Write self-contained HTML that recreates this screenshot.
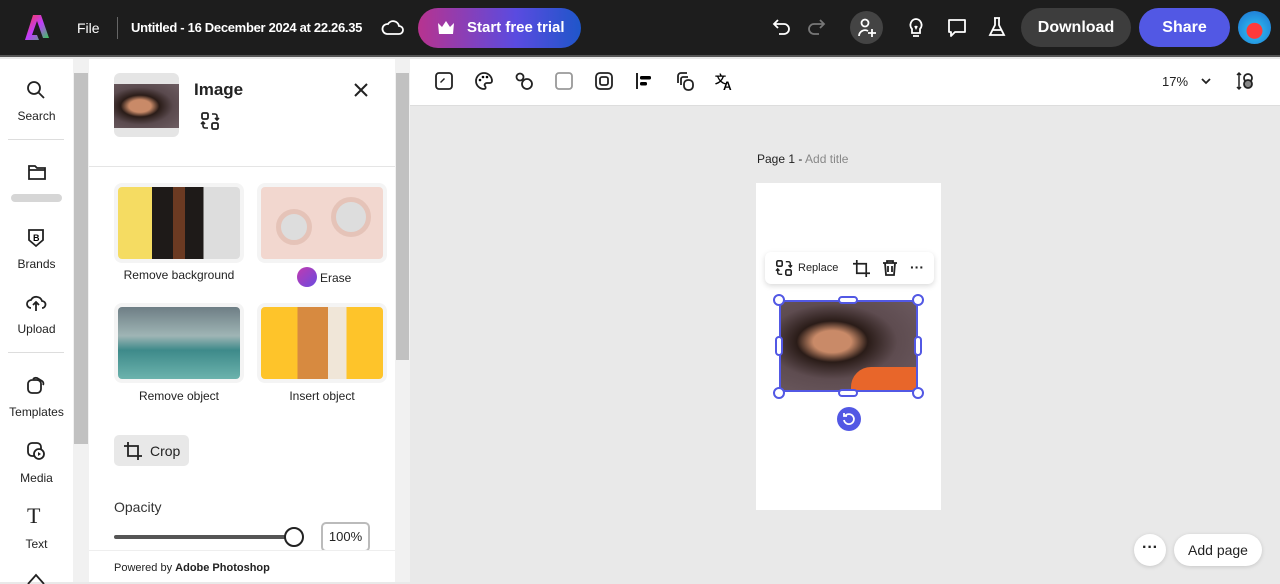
<!DOCTYPE html>
<html><head><meta charset="utf-8">
<style>
*{box-sizing:border-box;margin:0;padding:0}
body{width:1280px;height:582px;overflow:hidden;font-family:"Liberation Sans",sans-serif;background:#e9e9e9;position:relative;color:#222}
.abs{position:absolute}
.top{left:0;top:0;width:1280px;height:57px;background:#1d1d1d;border-bottom:2px solid #555}
.tw{color:#fff;font-size:14px}
.rail{left:0;top:59px;width:73px;height:523px;background:#fff}
.ri{position:absolute;left:0;width:73px;text-align:center;font-size:12px;color:#222}
.sb{background:#f1f1f1}
.panel{left:89px;top:59px;width:306px;height:523px;background:#fff}
.card{position:absolute;width:130px;height:80px;border-radius:8px;background:#f4f4f4;padding:4px}
.lbl{position:absolute;font-size:12px;text-align:center;width:140px}
.tb svg{position:absolute;top:71px}
.h{position:absolute;width:12px;height:12px;border:2px solid #5258e4;background:#fff;border-radius:50%}
.btn{position:absolute;color:#fff;font-weight:bold;font-size:16px;text-align:center;line-height:39px}
</style></head><body>
<div class="abs top"></div>
<svg class="abs" style="left:25px;top:14px" width="24" height="26" viewBox="0 0 24 26"><defs><linearGradient id="lg" x1="0" y1="0" x2="1" y2="1"><stop offset="0" stop-color="#ff3a3a"/><stop offset=".5" stop-color="#c03cff"/><stop offset="1" stop-color="#2cd44a"/></linearGradient></defs><path d="M8 1h8l8 23h-6l-6-17-5 14h5l2 5H0z" fill="url(#lg)"/></svg>
<div class="abs tw" style="left:77px;top:20px">File</div>
<div class="abs" style="left:117px;top:17px;width:1px;height:22px;background:#666"></div>
<div class="abs tw" style="left:131px;top:20px;font-weight:bold;font-size:13px;letter-spacing:-0.3px">Untitled - 16 December 2024 at 22.26.35</div>
<svg class="abs" style="left:381px;top:17px" width="24" height="20" viewBox="0 0 24 20"><path d="M6 17h12a4 4 0 0 0 0-8 6 6 0 0 0-11-2 5 5 0 0 0-1 10z" fill="none" stroke="#fff" stroke-width="1.8"/></svg>
<div class="abs" style="left:418px;top:8px;width:163px;height:40px;border-radius:20px;background:linear-gradient(90deg,#b7338f,#5a4be0 60%,#1f56c9)"></div>
<svg class="abs" style="left:437px;top:20px" width="18" height="15" viewBox="0 0 18 15"><path d="M1 3l4 4 4-6 4 6 4-4-1 11H2z" fill="#fff"/></svg>
<div class="abs tw" style="left:467px;top:19px;font-weight:bold;font-size:15px">Start free trial</div>
<svg class="abs" style="left:772px;top:17px" width="20" height="20" viewBox="0 0 20 20"><path d="M6 3L2 7l4 4M2 7h10a5 5 0 0 1 0 10H7" fill="none" stroke="#fff" stroke-width="1.8"/></svg>
<svg class="abs" style="left:806px;top:17px" width="20" height="20" viewBox="0 0 20 20"><path d="M14 3l4 4-4 4M18 7H8a5 5 0 0 0 0 10h5" fill="none" stroke="#777" stroke-width="1.8"/></svg>
<div class="abs" style="left:850px;top:11px;width:33px;height:33px;border-radius:50%;background:#444"></div>
<svg class="abs" style="left:855px;top:16px" width="24" height="24" viewBox="0 0 24 24"><circle cx="10" cy="7" r="3.5" fill="none" stroke="#fff" stroke-width="1.8"/><path d="M4 20a6 6 0 0 1 9-5M17 13v8M13 17h8" fill="none" stroke="#fff" stroke-width="1.8"/></svg>
<svg class="abs" style="left:906px;top:17px" width="20" height="22" viewBox="0 0 20 22"><path d="M10 2a6 6 0 0 0-4 10v4h8v-4a6 6 0 0 0-4-10zM7 19h6M9 9l1 2 1-2" fill="none" stroke="#fff" stroke-width="1.8"/></svg>
<svg class="abs" style="left:946px;top:17px" width="22" height="22" viewBox="0 0 22 22"><path d="M3 3h16v12H9l-4 4v-4H3z" fill="none" stroke="#fff" stroke-width="1.8" stroke-linejoin="round"/></svg>
<svg class="abs" style="left:987px;top:16px" width="20" height="22" viewBox="0 0 20 22"><path d="M7 2h6M8 2v7l-5 10h14L12 9V2M6 14h8" fill="none" stroke="#fff" stroke-width="1.8"/></svg>
<div class="btn" style="left:1021px;top:8px;width:110px;height:39px;border-radius:20px;background:#3d3d3d">Download</div>
<div class="btn" style="left:1139px;top:8px;width:91px;height:39px;border-radius:20px;background:#5258e4">Share</div>
<div class="abs" style="left:1238px;top:11px;width:33px;height:33px;border-radius:50%;background:radial-gradient(circle at 50% 60%,#ff3a3a 0 30%,#29a8e8 32%,#1c6fd0)"></div>

<div class="abs rail"></div>
<svg class="abs" style="left:26px;top:80px" width="20" height="20" viewBox="0 0 20 20"><circle cx="8" cy="8" r="6" fill="none" stroke="#222" stroke-width="1.8"/><path d="M12.5 12.5L18 18" stroke="#222" stroke-width="1.8"/></svg>
<div class="ri" style="top:109px">Search</div>
<div class="abs" style="left:8px;top:139px;width:56px;height:1px;background:#ddd"></div>
<svg class="abs" style="left:27px;top:163px" width="20" height="18" viewBox="0 0 20 18"><path d="M2 3h6l2 2h8v11H2z M2 7h16" fill="none" stroke="#222" stroke-width="1.8"/></svg>
<div class="abs" style="left:11px;top:194px;width:51px;height:8px;border-radius:4px;background:#d6d6d6"></div>
<svg class="abs" style="left:27px;top:228px" width="18" height="20" viewBox="0 0 18 20"><path d="M2 2h14v10l-7 6-7-6z" fill="none" stroke="#222" stroke-width="1.8"/><text x="6" y="13" font-size="9" font-weight="bold" font-family="Liberation Sans">B</text></svg>
<div class="ri" style="top:257px">Brands</div>
<svg class="abs" style="left:25px;top:293px" width="22" height="20" viewBox="0 0 22 20"><path d="M6 15a4 4 0 0 1 0-8 6 6 0 0 1 11 1 3.5 3.5 0 0 1 0 7M11 18V9M8 12l3-3 3 3" fill="none" stroke="#222" stroke-width="1.8"/></svg>
<div class="ri" style="top:322px">Upload</div>
<div class="abs" style="left:8px;top:352px;width:56px;height:1px;background:#ddd"></div>
<svg class="abs" style="left:26px;top:376px" width="20" height="20" viewBox="0 0 20 20"><rect x="2" y="4" width="13" height="13" rx="4" fill="none" stroke="#222" stroke-width="1.8"/><path d="M7 3a4 4 0 0 1 4-1l5 3a3 3 0 0 1 1 4" fill="none" stroke="#222" stroke-width="1.8"/></svg>
<div class="ri" style="top:405px">Templates</div>
<svg class="abs" style="left:26px;top:441px" width="20" height="20" viewBox="0 0 20 20"><rect x="2" y="2" width="13" height="13" rx="4" fill="none" stroke="#222" stroke-width="1.8"/><circle cx="13" cy="13" r="5" fill="#fff" stroke="#222" stroke-width="1.8"/><path d="M12 11v4l3-2z" fill="#222"/></svg>
<div class="ri" style="top:471px">Media</div>
<div class="abs" style="left:27px;top:503px;font-family:'Liberation Serif';font-size:22px">T</div>
<div class="ri" style="top:537px">Text</div>
<svg class="abs" style="left:25px;top:572px" width="22" height="12" viewBox="0 0 22 12"><path d="M3 12l8-9 8 9" fill="none" stroke="#222" stroke-width="1.8"/></svg>

<div class="abs sb" style="left:73px;top:59px;width:16px;height:523px"></div>
<div class="abs" style="left:74px;top:73px;width:14px;height:371px;background:#c1c1c1"></div>
<div class="abs sb" style="left:395px;top:59px;width:15px;height:523px"></div>
<div class="abs" style="left:396px;top:73px;width:13px;height:287px;background:#c1c1c1"></div>

<div class="abs panel"></div>
<div class="abs" style="left:114px;top:73px;width:65px;height:64px;border-radius:6px;background:#e5e5e5;overflow:hidden"><div style="margin-top:11px;height:44px;background:radial-gradient(ellipse at 40% 50%,#c98a68 0 20%,#2a1c18 35%,#5a4a4e 60%,#6e5e63);"></div></div>
<div class="abs" style="left:194px;top:80px;font-size:17px;font-weight:bold">Image</div>
<svg class="abs" style="left:200px;top:111px" width="20" height="20" viewBox="0 0 20 20"><rect x="2" y="2" width="6" height="6" rx="1.5" fill="none" stroke="#222" stroke-width="1.8"/><rect x="12" y="12" width="6" height="6" rx="1.5" fill="none" stroke="#222" stroke-width="1.8"/><path d="M12 3h3a2 2 0 0 1 2 2v4M15 7l2 2 2-2M8 17H5a2 2 0 0 1-2-2v-4M1 13l2-2 2 2" fill="none" stroke="#222" stroke-width="1.6"/></svg>
<svg class="abs" style="left:354px;top:83px" width="14" height="14" viewBox="0 0 14 14"><path d="M1 1l12 12M13 1L1 13" stroke="#222" stroke-width="2"/></svg>
<div class="abs" style="left:89px;top:166px;width:306px;height:1px;background:#e5e5e5"></div>

<div class="card" style="left:114px;top:183px"><div style="height:72px;border-radius:4px;background:linear-gradient(90deg,#f5dc62 0 28%,#1e1a18 28% 45%,#6b3a22 45% 55%,#1e1a18 55% 70%,#ddd 70%)"></div></div>
<div class="lbl" style="left:109px;top:268px">Remove background</div>
<div class="card" style="left:257px;top:183px"><div style="height:72px;border-radius:4px;background:#f2d7cf;position:relative"><div style="position:absolute;left:15px;top:22px;width:36px;height:36px;border-radius:50%;border:5px solid #e5c3b8;background:#ddd"></div><div style="position:absolute;left:70px;top:10px;width:40px;height:40px;border-radius:50%;border:5px solid #e5c3b8;background:#ddd"></div></div></div>
<div class="abs" style="left:297px;top:267px;width:20px;height:20px;border-radius:50%;background:linear-gradient(135deg,#c13ab0,#6a4be0)"></div>
<div class="abs" style="left:320px;top:271px;font-size:12px">Erase</div>
<div class="card" style="left:114px;top:303px"><div style="height:72px;border-radius:4px;background:linear-gradient(180deg,#6e7e85 0,#9fb5b5 40%,#3e8a8a 60%,#6cb3ad)"></div></div>
<div class="lbl" style="left:109px;top:389px">Remove object</div>
<div class="card" style="left:257px;top:303px"><div style="height:72px;border-radius:4px;background:linear-gradient(90deg,#fec42a 0 30%,#d78a40 30% 55%,#f0e6d8 55% 70%,#fec42a 70%)"></div></div>
<div class="lbl" style="left:252px;top:389px">Insert object</div>

<div class="abs" style="left:114px;top:435px;width:75px;height:31px;border-radius:5px;background:#e8e8e8"></div>
<svg class="abs" style="left:124px;top:442px" width="18" height="18" viewBox="0 0 18 18"><path d="M4 0v14h14M0 4h14v14" fill="none" stroke="#222" stroke-width="1.8"/></svg>
<div class="abs" style="left:150px;top:443px;font-size:14px">Crop</div>
<div class="abs" style="left:114px;top:499px;font-size:14px;color:#333">Opacity</div>
<div class="abs" style="left:114px;top:535px;width:175px;height:4px;border-radius:2px;background:#555"></div>
<div class="abs" style="left:284px;top:527px;width:20px;height:20px;border-radius:50%;border:2px solid #222;background:#fff"></div>
<div class="abs" style="left:321px;top:522px;width:49px;height:30px;border:2px solid #bbb;border-radius:5px;font-size:13px;text-align:center;line-height:26px">100%</div>
<div class="abs" style="left:89px;top:550px;width:306px;height:32px;background:#fff;border-top:1px solid #eee"></div>
<div class="abs" style="left:114px;top:562px;font-size:11px;color:#222">Powered by <b>Adobe Photoshop</b></div>

<div class="abs" style="left:410px;top:59px;width:870px;height:47px;background:#fff;border-bottom:1px solid #ddd"></div>
<div class="tb">
<svg style="left:434px" width="20" height="20" viewBox="0 0 20 20"><rect x="2" y="2" width="16" height="16" rx="3" fill="none" stroke="#222" stroke-width="1.8"/><path d="M6 11l4-4 1 1-4 4z" fill="#222"/></svg>
<svg style="left:474px" width="20" height="20" viewBox="0 0 20 20"><path d="M10 2a8 8 0 1 0 0 16c2 0 2-2 1-3s0-3 2-3h3a2 2 0 0 0 2-2 8 8 0 0 0-8-8z" fill="none" stroke="#222" stroke-width="1.8"/><circle cx="6" cy="9" r="1.3"/><circle cx="9" cy="6" r="1.3"/><circle cx="13" cy="6" r="1.3"/></svg>
<svg style="left:514px" width="20" height="20" viewBox="0 0 20 20"><circle cx="6" cy="6" r="3.5" fill="none" stroke="#222" stroke-width="1.8"/><circle cx="13" cy="13" r="5" fill="none" stroke="#222" stroke-width="1.8"/></svg>
<svg style="left:554px" width="20" height="20" viewBox="0 0 20 20"><rect x="2" y="2" width="16" height="16" rx="3" fill="none" stroke="#999" stroke-width="1.8"/></svg>
<svg style="left:594px" width="20" height="20" viewBox="0 0 20 20"><rect x="2" y="2" width="16" height="16" rx="4" fill="none" stroke="#222" stroke-width="1.8"/><rect x="6" y="6" width="8" height="8" rx="2" fill="none" stroke="#222" stroke-width="1.8"/></svg>
<svg style="left:634px" width="20" height="20" viewBox="0 0 20 20"><path d="M3 2v16" stroke="#222" stroke-width="2"/><rect x="6" y="5" width="11" height="3.5" rx="1.5"/><rect x="6" y="11" width="7" height="3.5" rx="1.5"/></svg>
<svg style="left:675px" width="20" height="20" viewBox="0 0 20 20"><path d="M3 12V5a3 3 0 0 1 3-3h6M6 14V8a2 2 0 0 1 2-2h5" fill="none" stroke="#222" stroke-width="1.8"/><rect x="9" y="9" width="9" height="10" rx="4" fill="none" stroke="#222" stroke-width="1.8"/></svg>
<svg style="left:715px" width="20" height="20" viewBox="0 0 20 20"><text x="0" y="12" font-size="11" font-weight="bold" font-family="Liberation Sans">文</text><text x="8" y="19" font-size="12" font-weight="bold" font-family="Liberation Sans">A</text></svg>
</div>
<div class="abs" style="left:1162px;top:74px;font-size:13px">17%</div>
<svg class="abs" style="left:1200px;top:76px" width="12" height="10" viewBox="0 0 12 10"><path d="M2 3l4 4 4-4" fill="none" stroke="#222" stroke-width="1.8"/></svg>
<svg class="abs" style="left:1236px;top:71px" width="20" height="20" viewBox="0 0 20 20"><path d="M3 2v16M1 4l2-2 2 2M1 16l2 2 2-2" fill="none" stroke="#222" stroke-width="1.5"/><circle cx="12" cy="7" r="4" fill="none" stroke="#222" stroke-width="1.8"/><circle cx="12" cy="13" r="4" fill="#888" stroke="#222" stroke-width="1.8"/></svg>

<div class="abs" style="left:757px;top:152px;font-size:12px;color:#222">Page 1 - <span style="color:#888">Add title</span></div>
<div class="abs" style="left:756px;top:183px;width:185px;height:327px;background:#fff"></div>
<div class="abs" style="left:765px;top:252px;width:169px;height:32px;background:#fff;border-radius:6px;box-shadow:0 2px 6px rgba(0,0,0,.15)"></div>
<svg class="abs" style="left:775px;top:259px" width="18" height="18" viewBox="0 0 20 20"><rect x="2" y="2" width="6" height="6" rx="1.5" fill="none" stroke="#222" stroke-width="1.8"/><rect x="12" y="12" width="6" height="6" rx="1.5" fill="none" stroke="#222" stroke-width="1.8"/><path d="M12 3h3a2 2 0 0 1 2 2v4M15 7l2 2 2-2M8 17H5a2 2 0 0 1-2-2v-4M1 13l2-2 2 2" fill="none" stroke="#222" stroke-width="1.6"/></svg>
<div class="abs" style="left:798px;top:262px;font-size:11px">Replace</div>
<svg class="abs" style="left:853px;top:260px" width="17" height="17" viewBox="0 0 18 18"><path d="M4 0v14h14M0 4h14v14" fill="none" stroke="#222" stroke-width="1.8"/></svg>
<svg class="abs" style="left:881px;top:259px" width="18" height="18" viewBox="0 0 18 18"><path d="M2 4h14M6 4V2h6v2M4 4l1 12h8l1-12M7 7v6M11 7v6" fill="none" stroke="#222" stroke-width="1.8"/></svg>
<div class="abs" style="left:910px;top:259px;font-size:14px;font-weight:bold">···</div>
<div class="abs" style="left:779px;top:300px;width:139px;height:92px;background:radial-gradient(ellipse at 38% 45%,#c98a68 0 16%,#2a1c18 30%,#5e4c50 55%,#6e5c62);border:2px solid #5258e4;overflow:hidden"><div style="position:absolute;left:70px;top:65px;width:70px;height:30px;background:#e8662a;border-radius:20px 0 0 0"></div></div>
<div class="h" style="left:773px;top:294px"></div><div class="h" style="left:912px;top:294px"></div>
<div class="h" style="left:773px;top:387px"></div><div class="h" style="left:912px;top:387px"></div>
<div class="abs" style="left:838px;top:296px;width:20px;height:8px;border:2px solid #5258e4;background:#fff;border-radius:4px"></div>
<div class="abs" style="left:838px;top:389px;width:20px;height:8px;border:2px solid #5258e4;background:#fff;border-radius:4px"></div>
<div class="abs" style="left:775px;top:336px;width:8px;height:20px;border:2px solid #5258e4;background:#fff;border-radius:4px"></div>
<div class="abs" style="left:914px;top:336px;width:8px;height:20px;border:2px solid #5258e4;background:#fff;border-radius:4px"></div>
<div class="abs" style="left:837px;top:407px;width:24px;height:24px;border-radius:50%;background:#5258e4"></div>
<svg class="abs" style="left:842px;top:412px" width="14" height="14" viewBox="0 0 14 14"><path d="M3 4a5 5 0 1 1-1 4M2 1v3h3" fill="none" stroke="#fff" stroke-width="1.8"/></svg>

<div class="abs" style="left:1134px;top:534px;width:32px;height:32px;border-radius:50%;background:#fff;box-shadow:0 1px 4px rgba(0,0,0,.15);text-align:center;font-weight:bold;line-height:28px;font-size:16px">···</div>
<div class="abs" style="left:1174px;top:534px;width:88px;height:32px;border-radius:16px;background:#fff;box-shadow:0 1px 4px rgba(0,0,0,.15);font-size:14px;text-align:center;line-height:32px">Add page</div>
</body></html>
